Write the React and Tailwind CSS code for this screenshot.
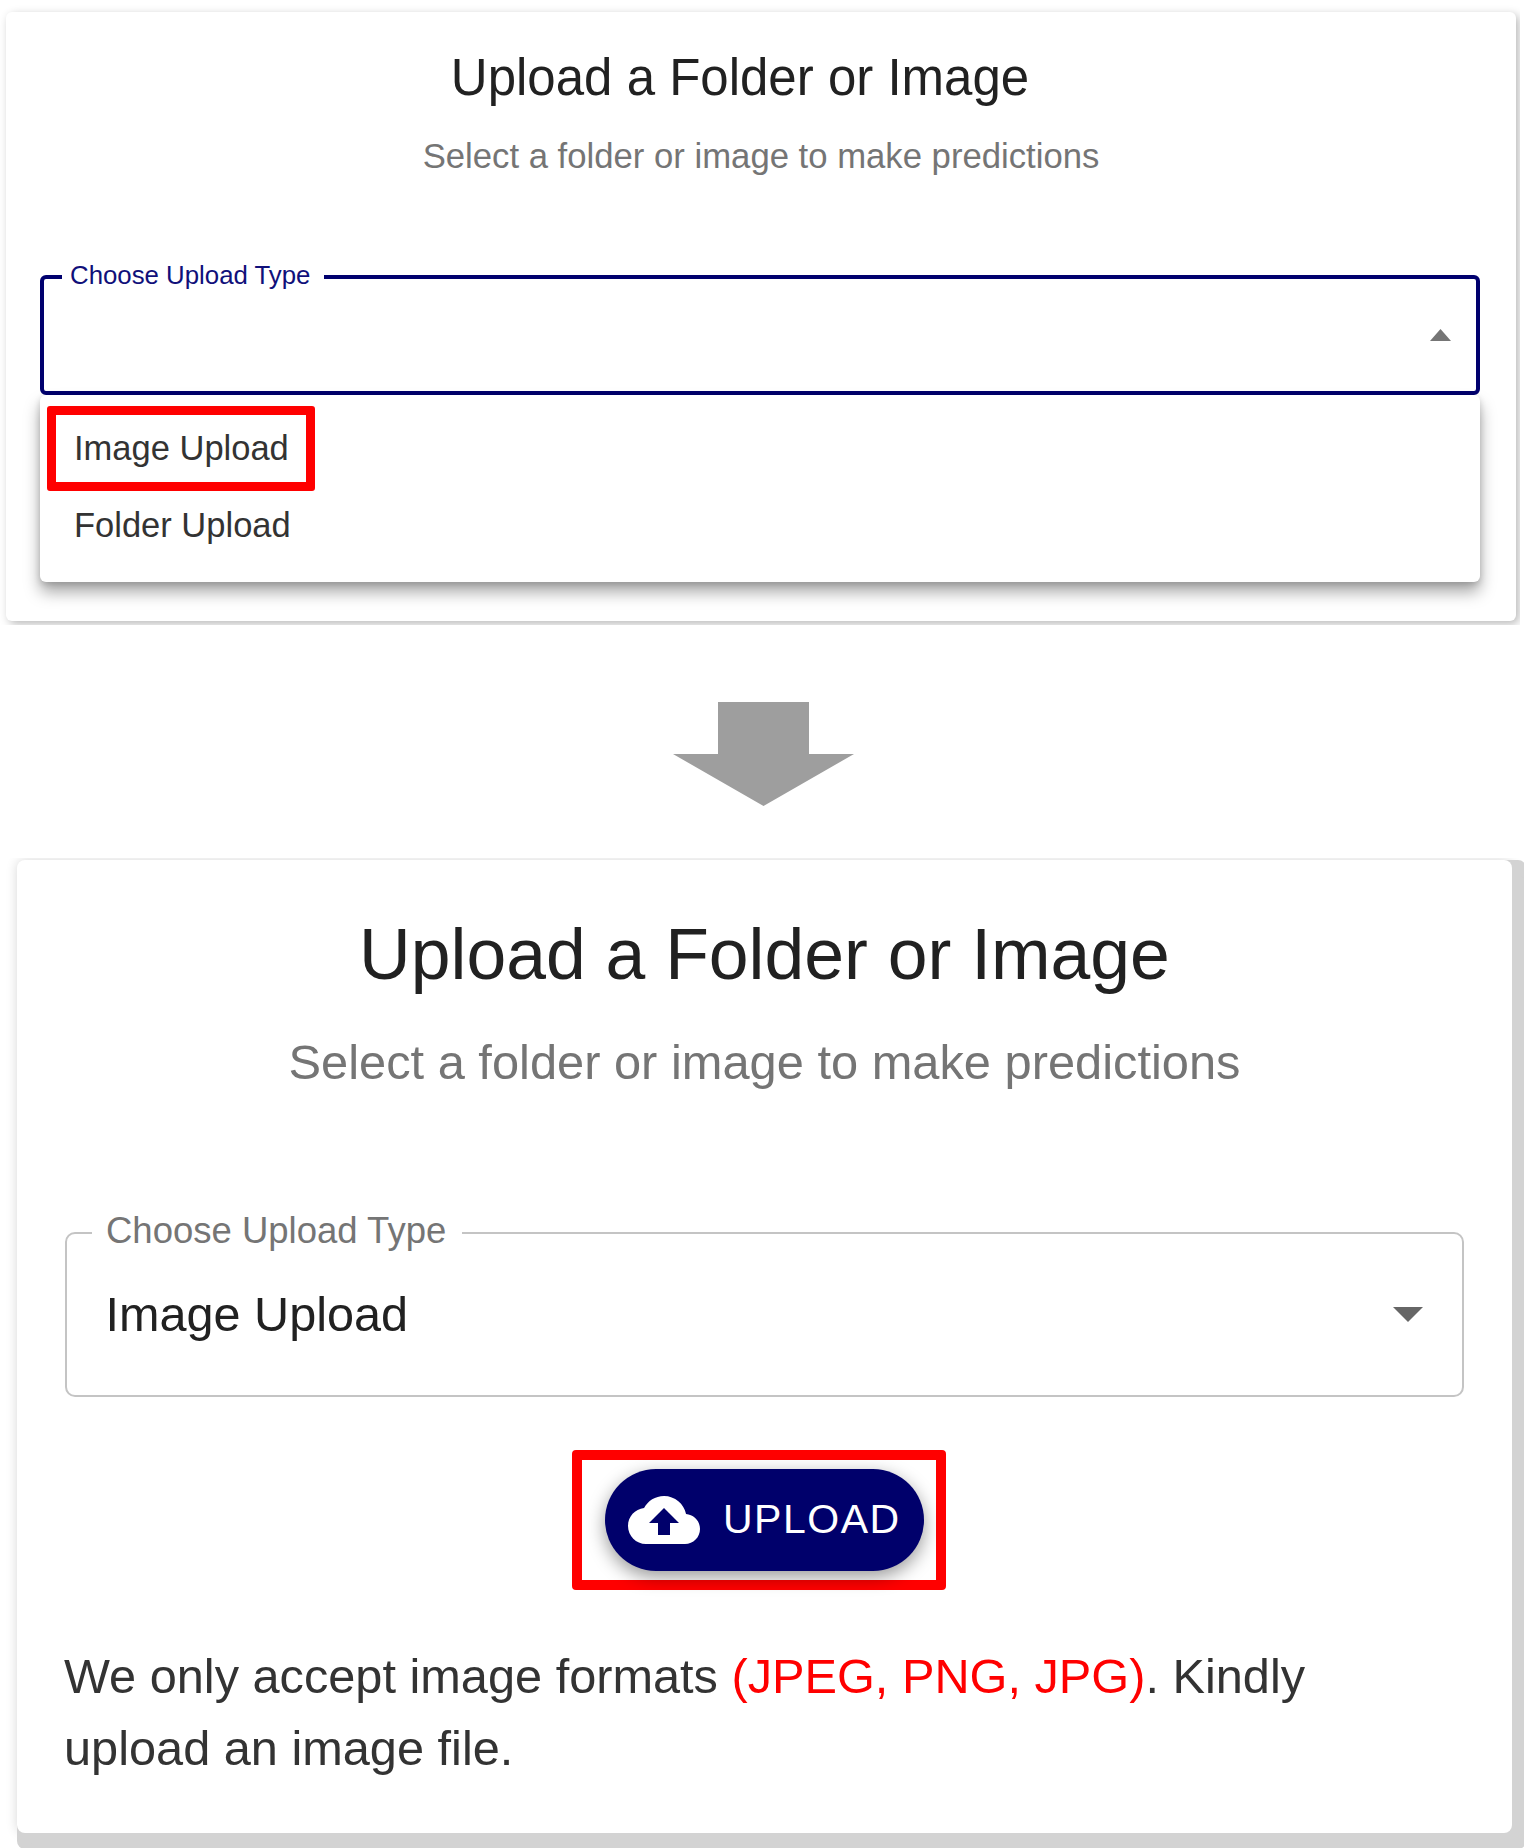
import React from 'react';

const FONT = { fontFamily: '"Liberation Sans", Arial, sans-serif' };

const CaretDown = ({ className }) => (
    <svg viewBox="7 10 10 5" className={className} fill="currentColor" preserveAspectRatio="none">
        <path d="M7 10l5 5 5-5z" />
    </svg>
);

const CaretUp = ({ className }) => (
    <svg viewBox="7 9 10 5" className={className} fill="currentColor" preserveAspectRatio="none">
        <path d="M7 14l5-5 5 5z" />
    </svg>
);

const CloudUpload = ({ className }) => (
    <svg viewBox="0 4 24 16" className={className} fill="currentColor" preserveAspectRatio="none">
        <path d="M19.35 10.04C18.67 6.59 15.64 4 12 4 9.11 4 6.6 5.64 5.35 8.04 2.34 8.36 0 10.91 0 14c0 3.31 2.69 6 6 6h13c2.76 0 5-2.24 5-5 0-2.64-2.05-4.78-4.65-4.96zM14 13v4h-4v-4H7l5-5 5 5h-3z" />
    </svg>
);

// the shots were cropped tight, so each card's shadow is cut off by its wrapper
const TopCard = () => (
    <div className="h-[625px] w-[1520px] overflow-hidden pl-[6px] pt-[12px]">
        <div className="relative h-[609px] w-[1510px] rounded-[6px] bg-white shadow-[3px_3px_10px_rgba(0,0,0,0.28)]">
            <h2 className="pr-[42px] pt-[36px] text-center text-[51px] leading-[60px] text-[#212121]">Upload a Folder or Image</h2>
            <p className="mt-[28px] text-center text-[34.7px] leading-[40px] text-[#757575]">Select a folder or image to make predictions</p>

            <div className="relative ml-[34px] mt-[99px] flex h-[120px] w-[1440px] items-center justify-end rounded-[6px] border-4 border-[#00006e] pr-[25px]">
                <span className="absolute left-[18px] top-[-22px] bg-white pl-[8px] pr-[14px] text-[25.8px] leading-[36px] text-[#10107a]">Choose Upload Type</span>
                <CaretUp className="h-[12px] w-[21px] text-[#757575]" />
            </div>

            <div className="absolute left-[34px] top-[383px] flex h-[187px] w-[1440px] flex-col rounded-[6px] bg-white pt-[11px] shadow-[0_10px_16px_rgba(0,0,0,0.35),0_2px_6px_rgba(0,0,0,0.15)]">
                <div className="ml-[7px] flex h-[85px] w-[268px] items-center rounded-[3px] border-[9px] border-[#ff0000] pl-[18px] text-[34.5px] text-[#333333]">Image Upload</div>
                <div className="flex h-[70px] items-center pl-[34px] text-[34.5px] text-[#333333]">Folder Upload</div>
            </div>
        </div>
    </div>
);

const Arrow = () => (
    <svg width="181" height="104" viewBox="0 0 181 104" fill="#9e9e9e" className="ml-[673px] mt-[77px]">
        <path d="M45 0h91v52h45l-90.500 52L0 52h45z" />
    </svg>
);

const BottomCard = () => (
    <div className="ml-[5px] mt-[52px] h-[990px] w-[1519px] overflow-hidden pl-[12px] pt-[2px]">
        <div className="h-[973px] w-[1495px] rounded-[8px] bg-white shadow-[14px_16px_0_#d3d3d3,14px_0_0_#d3d3d3,0_16px_0_#d3d3d3,0_0_12px_rgba(0,0,0,0.16)]">
            <h2 className="pt-[52px] text-center text-[71.5px] leading-[84px] text-[#212121]">Upload a Folder or Image</h2>
            <p className="mt-[38px] text-center text-[48.8px] leading-[56px] text-[#757575]">Select a folder or image to make predictions</p>

            <div className="relative ml-[48px] mt-[142px] flex h-[165px] w-[1399px] items-center justify-between rounded-[10px] border-[2.5px] border-[#c4c4c4] pl-[38.5px] pr-[39px]">
                <span className="absolute left-[25px] top-[-28px] bg-white pl-[14px] pr-[16px] text-[36.5px] leading-[50px] text-[#757575]">Choose Upload Type</span>
                <span className="text-[48.6px] text-[#212121]">Image Upload</span>
                <CaretDown className="h-[15px] w-[30px] text-[#666666]" />
            </div>

            <div className="ml-[555px] mt-[53px] flex h-[140px] w-[374px] items-center rounded-[4px] border-[10px] border-[#ff0000] pl-[23px]">
                <button className="flex h-[102px] w-[319px] shrink-0 items-center rounded-full bg-[#00006b] pl-[23px] text-[41px] text-white shadow-[0_6px_18px_rgba(0,0,0,0.4)]">
                    <CloudUpload className="h-[48px] w-[72px]" />
                    <span className="ml-[23px] tracking-[1.5px]">UPLOAD</span>
                </button>
            </div>

            <p className="ml-[47px] mt-[50px] w-[1300px] text-[48.7px] leading-[72px] text-[#333333]">
                We only accept image formats <span className="text-[#ff0000]">(JPEG, PNG, JPG)</span>. Kindly upload an image file.
            </p>
        </div>
    </div>
);

const App = () => {
    return (
        <div className="flow-root h-[1848px] w-[1524px] overflow-hidden bg-white" style={FONT}>
            <TopCard />
            <Arrow />
            <BottomCard />
        </div>
    );
};

export default App;
